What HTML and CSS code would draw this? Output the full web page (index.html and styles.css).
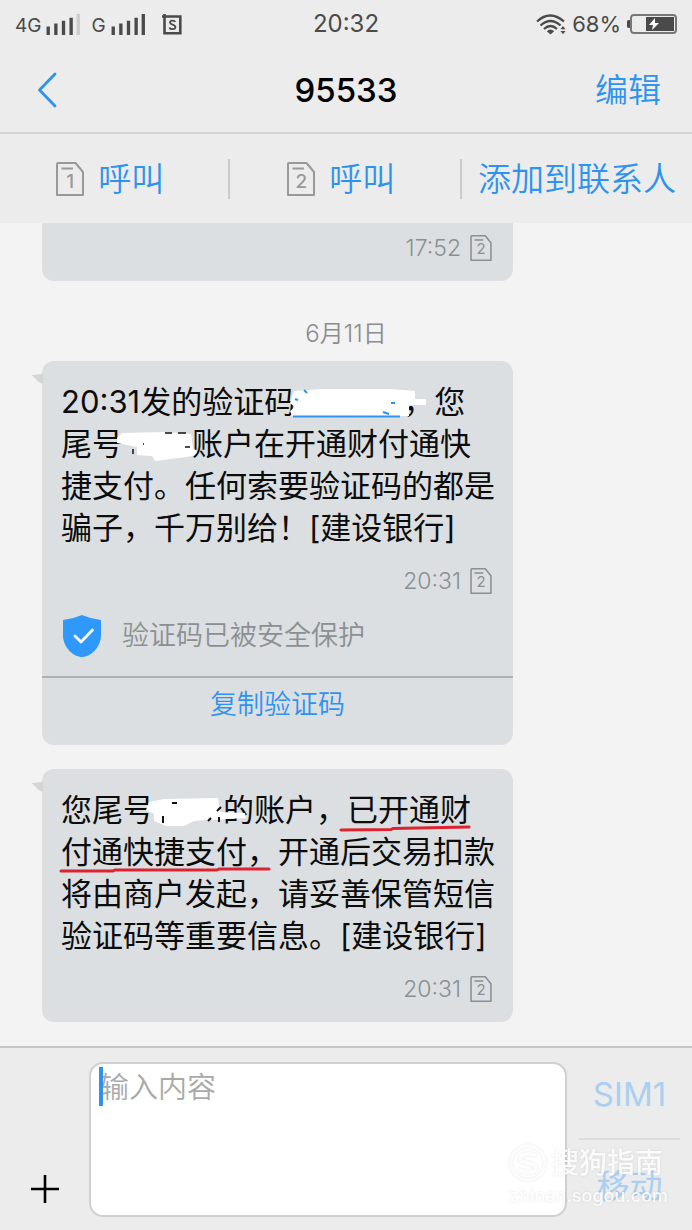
FILE: index.html
```html
<!DOCTYPE html>
<html lang="zh-CN">
<head>
<meta charset="utf-8">
<meta name="viewport" content="width=device-width, initial-scale=1">
<title>95533</title>
<link rel="stylesheet" href="styles.css">
</head>
<body>
<svg class="defs" aria-hidden="true">
  <symbol id="sim" viewBox="0 0 28 34">
    <path d="M2 1H19.500L27 10V33H1V2Q1 1 2 1Z" fill="none" stroke="currentColor" stroke-width="2" stroke-linejoin="round"/>
    <path d="M5.500 6.500H17" stroke="currentColor" stroke-width="2"/>
  </symbol>
</svg>
<div class="app">
  <div class="status">
    <div class="status-left">
      <span class="net">4G</span>
      <svg class="bars" viewBox="0 0 36 22" aria-hidden="true"><path d="M2 13v9M10 10v12M18 7v15M26 4v18" stroke="#4a4a4a" stroke-width="3.500"/><path d="M33.500 0v22" stroke="#cdcdcd" stroke-width="3.500"/></svg>
      <span class="net net-second">G</span>
      <svg class="bars" viewBox="0 0 36 22" aria-hidden="true"><path d="M2 13v9M10 10v12M18 7v15M26 4v18M33.500 0v22" stroke="#4a4a4a" stroke-width="3.500"/></svg>
      <svg class="badge" viewBox="0 0 20 21" aria-hidden="true"><path d="M0 2.500H18.300V19.300H2.500V0" fill="none" stroke="#4a4a4a" stroke-width="2.600"/><path d="M13.200 8C12.600 6.200 8 6 8 8.500C8 11 13.400 10.200 13.400 13C13.400 16 8 15.600 7.500 13.500" fill="none" stroke="#4a4a4a" stroke-width="1.800"/></svg>
    </div>
    <span class="clock">20:32</span>
    <div class="status-right">
      <svg class="wifi" viewBox="0 0 30 21" aria-hidden="true"><g fill="none" stroke="#4a4a4a" stroke-width="2.300"><path d="M1 7.500Q14 -4.500 28 7.500"/><path d="M4.500 11.500Q14.500 2.500 24.500 11.500"/><path d="M8 15Q14.500 9 21 15"/></g><path d="M10.800 17.200Q14.500 14 18.200 17.200L14.500 20.500Z" fill="#4a4a4a"/><path d="M24.500 15.200L27 12L29.500 15.200ZM24.500 17L27 20.200L29.500 17Z" fill="#4a4a4a"/></svg>
      <span class="percent">68%</span>
      <svg class="battery" viewBox="0 0 50 20" aria-hidden="true"><rect x="4" y="1" width="45" height="18" rx="3" fill="none" stroke="#777" stroke-width="2"/><path d="M0 7Q0 6 3 6V14Q0 14 0 13Z" fill="#4a4a4a"/><rect x="19" y="3" width="28" height="14" fill="#4a4a4a"/><path d="M28 4L22 11H26L25 16L32 9H28Z" fill="#fff"/></svg>
    </div>
  </div>

  <header class="titlebar">
    <button class="back" aria-label="返回"><svg viewBox="0 0 20 36" aria-hidden="true"><path d="M18 2L2.500 18L18 34" fill="none" stroke="#2e93ef" stroke-width="2.800" stroke-linecap="round" stroke-linejoin="round"/></svg></button>
    <h1>95533</h1>
    <button class="edit">编辑</button>
  </header>

  <nav class="actions">
    <button class="call"><span class="sim sim-big"><svg aria-hidden="true"><use href="#sim"/></svg><span>1</span></span>呼叫</button>
    <button class="call"><span class="sim sim-big"><svg aria-hidden="true"><use href="#sim"/></svg><span>2</span></span>呼叫</button>
    <button>添加到联系人</button>
  </nav>

  <main class="chat">
    <article class="bubble bubble-cut">
      <div class="meta"><time>17:52</time><span class="sim"><svg aria-hidden="true"><use href="#sim"/></svg><span>2</span></span></div>
    </article>

    <div class="date">6月11日</div>

    <article class="bubble">
      <svg class="tail" viewBox="0 0 12 12" aria-hidden="true"><path d="M1 2Q8 2 12 0V11Q6 9 1 2Z" fill="#d3d6d8"/></svg>
      <p>20:31发的验证码<span class="hidden-code"><svg viewBox="0 0 140 36" aria-hidden="true"><path d="M7 4L34 2L104 2L128 4V12L139 12V18L122 18V29L5 29L3 24L8 20L3 16Z" fill="#fff"/><path d="M6 29.500H113" stroke="#2e93ef" stroke-width="2"/><path d="M17 3l3 3M8 12l3 1M104 16h4M96 25l6 2" stroke="#2e93ef" stroke-width="2"/></svg></span>，您<br>尾号<span class="hidden-tail"><svg viewBox="0 0 90 36" aria-hidden="true"><path d="M7 4L50 3L76 5L78 19L82 23L78 27L48 31L40 32L37 27L22 26V18L2 14V9Z" fill="#fff"/><path d="M18 20v5M50 4h7M63 4h8M70 18h5M28 15h1" stroke="#111" stroke-width="1.500"/></svg></span>账户在开通财付通快<br>捷支付。任何索要验证码的都是<br>骗子，千万别给！[建设银行]</p>
      <div class="meta"><time>20:31</time><span class="sim"><svg aria-hidden="true"><use href="#sim"/></svg><span>2</span></span></div>
      <div class="guard">
        <svg viewBox="0 0 38 42" aria-hidden="true"><path d="M19 0Q28 4 38 5V20C38 33 27 42 19 42S0 33 0 20V5Q10 4 19 0Z" fill="#2e98fb"/><path d="M12 21L18 27L29.500 15" fill="none" stroke="#fff" stroke-width="2.800" stroke-linecap="round" stroke-linejoin="round"/></svg>
        <span>验证码已被安全保护</span>
      </div>
      <button class="copy">复制验证码</button>
    </article>

    <article class="bubble">
      <svg class="tail" viewBox="0 0 12 12" aria-hidden="true"><path d="M1 2Q8 2 12 0V11Q6 9 1 2Z" fill="#d3d6d8"/></svg>
      <p>您尾号<span class="hidden-tail"><svg viewBox="0 0 90 36" aria-hidden="true"><path d="M3 7L18 4L72 3L74 17L99 18L100 23L60 25L48 26L38 31L20 31L8 26V19L0 15Z" fill="#fff"/><path d="M17 21v7M26 8h5M62 26l3-3M75 12l-4 4M73 22v5" stroke="#111" stroke-width="2"/></svg></span>的账户，<mark class="mark-wide">已开通财<svg viewBox="0 0 132 8" preserveAspectRatio="none" aria-hidden="true"><path d="M2 6L52 5.500L54 4.500L130 3" fill="none" stroke="#da2530" stroke-width="3" stroke-linecap="round"/></svg></mark><br><mark class="mark-long">付通快捷支付，<svg viewBox="0 0 212 8" preserveAspectRatio="none" aria-hidden="true"><path d="M2 5L54 5L56 4L158 4L160 3L210 3" fill="none" stroke="#da2530" stroke-width="3" stroke-linecap="round"/></svg></mark>开通后交易扣款<br>将由商户发起，请妥善保管短信<br>验证码等重要信息。[建设银行]</p>
      <div class="meta"><time>20:31</time><span class="sim"><svg aria-hidden="true"><use href="#sim"/></svg><span>2</span></span></div>
    </article>
  </main>

  <footer class="composer">
    <button class="add" aria-label="添加附件"><svg viewBox="0 0 28 28" aria-hidden="true"><path d="M14 0V28M0 14H28" stroke="#000" stroke-width="2.600"/></svg></button>
    <div class="field">
      <textarea aria-label="短信内容" placeholder="输入内容"></textarea>
      <span class="caret"></span>
    </div>
    <div class="senders">
      <button>SIM1</button>
      <button>移动</button>
    </div>
    <div class="watermark">
      <svg viewBox="0 0 38 38" aria-hidden="true"><circle cx="19" cy="19" r="17" fill="none" stroke="currentColor" stroke-width="3"/><path d="M27 12C24 9 11 9 11 14.500S27 18 27 24S14 29 10 25" fill="none" stroke="currentColor" stroke-width="4"/></svg>
      <span class="watermark-name">搜狗指南</span>
      <span class="watermark-site">zhinan.sogou.com</span>
    </div>
  </footer>
</div>
</body>
</html>
```
FILE: styles.css
```css
* { box-sizing: border-box; }
body {
  margin: 0;
  background: #f3f3f3;
  color: #0c0c0c;
  font-family: Inter, "Noto Sans CJK SC", sans-serif;
  font-weight: 350;
}
button {
  padding: 0;
  border: 0;
  background: none;
  color: #2e93ef;
  font: inherit;
  font-size: 33px;
  line-height: 40px;
}
svg { display: block; }
.defs { position: absolute; width: 0; height: 0; }
.app { display: flex; flex-direction: column; min-height: 100vh; }

.status {
  display: grid;
  grid-template-columns: 1fr auto 1fr;
  align-items: center;
  height: 48px;
  padding: 0 15px;
  background: #ececec;
  color: #4a4a4a;
  font-weight: 400;
}
.status-left, .status-right { display: flex; align-items: center; }
.status-right { justify-content: flex-end; gap: 6px; }
.net { margin-right: 5px; font-size: 19px; line-height: 24px; padding-top: 4px; }
.net-second { margin-left: 10px; }
.bars { width: 35px; height: 21px; }
.badge { width: 20px; height: 21px; margin-left: 16px; }
.clock { font-size: 24px; line-height: 30px; }
.wifi { width: 30px; height: 21px; }
.percent { font-size: 22px; line-height: 28px; }
.battery { width: 50px; height: 20px; }

.titlebar {
  display: grid;
  grid-template-columns: 1fr auto 1fr;
  align-items: center;
  height: 86px;
  padding: 0 31px;
  background: #ececec;
  border-bottom: 2px solid #d3d3d3;
}
.titlebar h1 { margin: 0; color: #000; font-size: 33px; line-height: 40px; font-weight: 500; }
.back { justify-self: start; padding-left: 6px; }
.back svg { width: 20px; height: 36px; }
.edit { justify-self: end; }

.actions {
  display: grid;
  grid-template-columns: 33% 33.5% 33.5%;
  height: 89px;
  align-items: center;
  background: #ececec;
}
.actions button { display: flex; align-items: center; justify-content: center; gap: 14px; white-space: nowrap; }
.actions .call { padding-right: 8px; }
.actions button + button { border-left: 2px solid #cbcbcb; }

.sim {
  display: grid;
  width: 22px;
  height: 26px;
  color: #8c8f91;
  font-size: 15px;
  line-height: 18px;
  font-weight: 400;
}
.sim svg { grid-area: 1 / 1; width: 100%; height: 100%; }
.sim > span { grid-area: 1 / 1; align-self: end; justify-self: center; padding-bottom: 3px; }
.sim-big { width: 28px; height: 34px; color: #999; font-size: 19px; line-height: 22px; font-weight: 500; }

.chat { flex: 1; padding: 0 42px 24px; }
.bubble {
  position: relative;
  width: 471px;
  max-width: 100%;
  margin-bottom: 24px;
  padding-top: 20px;
  border-radius: 12px;
  background: #dbdfe2;
}
.bubble:last-child { margin-bottom: 0; padding-bottom: 20px; }
.bubble-cut { margin: 0; padding: 12px 0 20px; border-radius: 0 0 12px 12px; }
.tail { position: absolute; left: -11px; top: 12px; width: 12px; height: 12px; }
.bubble p { margin: 0; padding-left: 19px; font-size: 31px; line-height: 42px; font-weight: 400; white-space: nowrap; }
.meta {
  display: flex;
  align-items: center;
  justify-content: flex-end;
  gap: 9px;
  padding-right: 21px;
  color: #8c8f91;
  font-size: 23px;
  line-height: 26px;
}
.bubble p + .meta { padding-top: 19px; }
.date { padding: 39px 0 13px; color: #8c8c8c; font-size: 24px; line-height: 28px; text-align: center; }
.hidden-code, .hidden-tail { position: relative; display: inline-block; width: 108px; height: 36px; vertical-align: middle; }
.hidden-tail { width: 69px; }
.hidden-code svg { width: 140px; height: 36px; margin-left: -8px; }
.hidden-tail svg { width: 90px; height: 36px; margin-left: -8px; overflow: visible; }
mark { position: relative; background: none; color: inherit; }
mark svg { position: absolute; left: 0; bottom: -4px; height: 8px; }
.mark-wide svg { left: -8px; width: 132px; }
.mark-long svg { left: -2px; width: 212px; }

.guard {
  display: flex;
  align-items: center;
  gap: 21px;
  padding: 21px 21px 19px;
  color: #8c8f91;
  font-size: 27px;
  line-height: 42px;
}
.guard svg { width: 38px; height: 42px; }
.copy {
  width: 100%;
  height: 69px;
  padding-bottom: 14px;
  border-top: 2px solid #adb0b3;
  font-size: 27px;
  line-height: 36px;
}

.composer {
  position: relative;
  display: grid;
  grid-template-columns: 89px 1fr 101px;
  padding: 14px 12px 13px 0;
  border-top: 2px solid #c6c6c6;
  background: #ececec;
}
.add { align-self: end; justify-self: center; margin-bottom: 14px; }
.add svg { width: 28px; height: 28px; }
.field { position: relative; margin-right: 12px; }
textarea {
  display: block;
  width: 100%;
  height: 155px;
  padding: 5px 9px;
  border: 2px solid #d0d0d0;
  border-radius: 14px;
  background: #fff;
  font: inherit;
  font-size: 29px;
  line-height: 38px;
  resize: none;
  outline: 0;
}
textarea::placeholder { color: #a9a9a9; opacity: 1; }
.caret { position: absolute; left: 10px; top: 5px; width: 4px; height: 39px; background: #2e93ef; }
.senders { display: grid; grid-template-rows: 78px 1fr; }
.senders button { color: #aacff2; font-weight: 400; }
.senders button:first-child { padding-bottom: 12px; border-bottom: 2px solid #dcdcdc; }
.senders button:last-child { padding-top: 14px; }
.watermark {
  position: absolute;
  right: 24px;
  bottom: 20px;
  display: grid;
  grid-template-columns: 38px auto;
  column-gap: 4px;
  color: rgba(255, 255, 255, 0.85);
  font-weight: 500;
  filter: drop-shadow(0 0 1px rgba(0, 0, 0, 0.12));
  pointer-events: none;
}
.watermark svg { width: 38px; height: 38px; }
.watermark-name { font-size: 28px; line-height: 38px; }
.watermark-site { grid-column: 1 / 3; justify-self: end; font-size: 18px; line-height: 28px; }
```
